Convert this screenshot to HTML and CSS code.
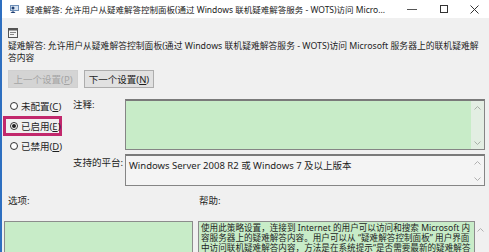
FILE: index.html
```html
<!DOCTYPE html>
<html lang="zh-CN">
<head>
  <meta charset="UTF-8">
  <title>疑难解答</title>
  <link rel="stylesheet" href="styles.css">
</head>
<body>
  <div class="window">
    <div class="titlebar">
      <svg class="app-icon" width="9" height="8" viewBox="0 0 9 8">
        <rect x="0" y="0" width="9" height="6" fill="#6d8fb8"/>
        <rect x="1" y="1" width="7" height="4" fill="#d7e3f1"/>
        <circle cx="3" cy="3" r="1.5" fill="#1f3f73"/>
        <path d="M0.5 8 Q3 4.5 5.5 8 Z" fill="#1f3f73"/>
      </svg>
      <span class="title">疑难解答: 允许用户从疑难解答控制面板(通过 Windows 联机疑难解答服务 - WOTS)访问 Micro...</span>
      <div class="controls">
        <span class="ctl"><svg width="10" height="1"><rect width="10" height="1" fill="#555"/></svg></span>
        <span class="ctl"><svg width="8" height="8"><rect x="0.5" y="0.5" width="7" height="7" fill="none" stroke="#333"/></svg></span>
        <span class="ctl ctl-close"><svg width="9" height="9"><path d="M0.5 0.5 L8.5 8.5 M8.5 0.5 L0.5 8.5" stroke="#333" stroke-width="1"/></svg></span>
      </div>
    </div>

    <div class="content">
      <svg class="policy-icon" width="10" height="10" viewBox="0 0 10 10">
        <rect x="0.5" y="0.5" width="9" height="9" fill="#f4f4f4" stroke="#555"/>
        <rect x="0.5" y="0.5" width="9" height="2" fill="#555"/>
        <rect x="2" y="4" width="6" height="1" fill="#888"/>
        <rect x="2" y="6" width="4" height="1" fill="#888"/>
      </svg>
      <p class="heading">疑难解答: 允许用户从疑难解答控制面板(通过 Windows 联机疑难解答服务 - WOTS)访问 Microsoft 服务器上的联机疑难解<br>答内容</p>

      <div class="nav">
        <button class="nav-btn" disabled>上一个设置(<u>P</u>)</button>
        <button class="nav-btn">下一个设置(<u>N</u>)</button>
      </div>

      <div class="settings">
        <div class="states">
          <label class="state"><span class="radio"></span><span>未配置(<u>C</u>)</span></label>
          <label class="state state-marked"><span class="radio radio-on"></span><span>已启用(<u>E</u>)</span></label>
          <label class="state"><span class="radio"></span><span>已禁用(<u>D</u>)</span></label>
        </div>
        <div class="fields">
          <span class="field-label">注释:</span>
          <div class="box box-note">
            <div class="box-text"></div>
            <div class="scroll">
              <svg width="7" height="4"><path d="M0.5 3.5 L3.5 0.5 L6.5 3.5" fill="none" stroke="#a8b0a8"/></svg>
              <svg width="7" height="4"><path d="M0.5 0.5 L3.5 3.5 L6.5 0.5" fill="none" stroke="#a8b0a8"/></svg>
            </div>
          </div>
          <span class="field-label field-label-low">支持的平台:</span>
          <div class="box box-platform">
            <div class="box-text">Windows Server 2008 R2 或 Windows 7 及以上版本</div>
            <div class="scroll">
              <svg width="7" height="4"><path d="M0.5 3.5 L3.5 0.5 L6.5 3.5" fill="none" stroke="#b0b0b0"/></svg>
              <svg width="7" height="4"><path d="M0.5 0.5 L3.5 3.5 L6.5 0.5" fill="none" stroke="#b0b0b0"/></svg>
            </div>
          </div>
        </div>
      </div>

      <div class="pane-labels">
        <span class="pane-label-options">选项:</span>
        <span>帮助:</span>
      </div>

      <div class="panes">
        <div class="options"></div>
        <div class="help">
          使用此策略设置，连接到 Internet 的用户可以访问和搜索 Microsoft 内<br>
          容服务器上的疑难解答内容。用户可以从 “疑难解答控制面板” 用户界面<br>
          中访问联机疑难解答内容，方法是在系统提示“是否需要最新的疑难解答
        </div>
        <div class="help-scroll">
          <svg width="7" height="4"><path d="M0.5 3.5 L3.5 0.5 L6.5 3.5" fill="none" stroke="#b0b0b0"/></svg>
        </div>
      </div>
    </div>
  </div>
</body>
</html>
```

FILE: styles.css
```css
/* Reset */
body, p, button {
  margin: 0;
  padding: 0;
}

* {
  box-sizing: border-box;
}

body {
  font-family: "Noto Sans", "Noto Sans CJK SC", sans-serif;
  font-size: 9.5px;
  color: #1e1e1e;
  background-color: #f0f0f0;
}

.window {
  height: 252px;
  border-left: 2px solid #2e6fc0;
  overflow: hidden;
}

/* Title bar */
.titlebar {
  height: 18px;
  background-color: #fff;
  display: flex;
  align-items: center;
  padding-left: 8px;
}

.app-icon {
  flex: none;
  margin-right: 7px;
}

.title {
  flex: 1;
  font-size: 8.5px;
  white-space: nowrap;
  overflow: hidden;
  color: #222;
}

.controls {
  display: flex;
  height: 100%;
}

.ctl {
  width: 32px;
  display: flex;
  align-items: center;
  justify-content: center;
}

.ctl-close {
  width: 29px;
}

/* Policy body */
.content {
  padding: 0 4px 0 6px;
}

.policy-icon {
  display: block;
  margin-top: 10px;
}

.heading {
  margin-top: 2px;
  font-size: 8.8px;
  line-height: 12px;
  white-space: nowrap;
}

.nav {
  display: flex;
  gap: 6px;
  margin-top: 6px;
}

.nav-btn {
  width: 70px;
  height: 18px;
  font-family: inherit;
  font-size: 9.5px;
  color: #1e1e1e;
  background-color: #e1e1e1;
  border: 1px solid #adadad;
}

.nav-btn:disabled {
  color: #a4a4a4;
  background-color: #d4d4d4;
  border-color: #d0d0d0;
}

/* States and fields */
.settings {
  display: flex;
  margin-top: 11px;
  margin-left: -5px;
}

.states {
  width: 70px;
  margin-top: -3px;
  display: flex;
  flex-direction: column;
}

.state {
  width: 59px;
  height: 20px;
  display: flex;
  align-items: center;
  gap: 3px;
  padding-left: 4px;
  border: 3px solid transparent;
  white-space: nowrap;
}

.state-marked {
  border-color: #c2286c;
}

.radio {
  flex: none;
  width: 8px;
  height: 8px;
  border: 1px solid #333;
  border-radius: 50%;
  background-color: #fff;
  display: flex;
  align-items: center;
  justify-content: center;
}

.radio-on::after {
  content: "";
  width: 4px;
  height: 4px;
  border-radius: 50%;
  background-color: #1e1e1e;
}

.fields {
  flex: 1;
  display: grid;
  grid-template-columns: 52px 1fr;
  row-gap: 4px;
}

.field-label {
  line-height: 12px;
  white-space: nowrap;
}

.field-label-low {
  padding-top: 3px;
}

.box {
  display: flex;
  border: 1px solid #858585;
  border-top: 2px solid #7a7a7a;
}

.box-note {
  height: 51px;
  background-color: #c8ecc8;
}

.box-platform {
  height: 32px;
  background-color: #f4f4f4;
}

.box-text {
  flex: 1;
  padding: 2px 3px;
  white-space: nowrap;
}

.scroll {
  width: 13px;
  display: flex;
  flex-direction: column;
  justify-content: space-between;
  align-items: center;
  padding: 5px 0 4px;
}

.box-note .scroll {
  background-color: #e3eee3;
}

/* Options and help */
.pane-labels {
  display: flex;
  margin-top: 9px;
  line-height: 12px;
}

.pane-label-options {
  width: 191px;
}

.panes {
  display: flex;
  margin-top: 14px;
  margin-left: -4px;
  height: 40px;
}

.options {
  width: 189px;
  background-color: #c8ecc8;
  border: 1px solid #8c8c8c;
}

.help {
  width: 277px;
  margin-left: 5px;
  padding: 1px 2px;
  font-size: 8.6px;
  line-height: 10px;
  white-space: nowrap;
  overflow: hidden;
  background-color: #c8ecc8;
  border: 1px solid #8c8c8c;
}

.help-scroll {
  flex: 1;
  display: flex;
  justify-content: center;
  padding-top: 7px;
}
```
